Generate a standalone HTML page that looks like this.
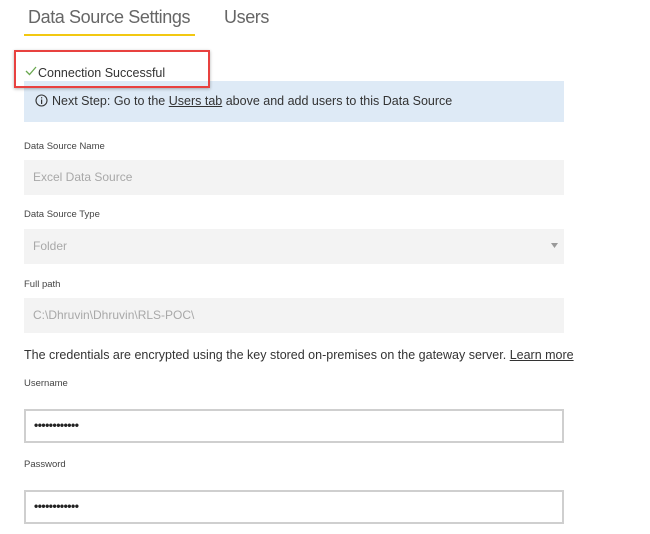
<!DOCTYPE html>
<html><head><style>
body{margin:0;width:650px;height:534px;background:#fff;font-family:"Liberation Sans",sans-serif;position:relative;overflow:hidden;color:#333}
.a{position:absolute;white-space:nowrap}
.lbl{font-size:9.5px;color:#444}
.box{position:absolute;left:24px;width:540px;height:35px;background:#f3f3f3;box-sizing:border-box}
.box span{position:absolute;left:9px;top:10px;font-size:12px;color:#a8a8a8}
.inp{position:absolute;left:24px;width:540px;height:34px;background:#fff;border:2px solid #cfcfcf;box-sizing:border-box}
.inp span{position:absolute;left:8px;top:7px;font-size:12px;letter-spacing:-0.5px;color:#222;font-weight:bold}
</style></head><body>
<div class="a" style="left:28px;top:7px;font-size:18px;letter-spacing:-0.4px;color:#666">Data Source Settings</div>
<div class="a" style="left:224px;top:7px;font-size:18px;letter-spacing:-0.4px;color:#666">Users</div>
<div class="a" style="left:24px;top:34px;width:171px;height:2px;background:#f2c811"></div>
<div class="a" style="left:24px;top:81px;width:540px;height:41px;background:#deeaf6"></div>
<div class="a" style="left:14px;top:50px;width:192px;height:34px;border:2px solid #e8413f;box-shadow:0 1px 3px rgba(0,0,0,.3)"></div>
<svg class="a" style="left:25px;top:66px" width="12" height="10"><path d="M1 5 L4.5 8.5 L11 1" stroke="#6aa84f" stroke-width="1.3" fill="none"/></svg>
<div class="a" style="left:38px;top:66px;font-size:12.5px;color:#333">Connection Successful</div>
<svg class="a" style="left:35px;top:94px" width="13" height="13"><circle cx="6.5" cy="6.5" r="5.5" stroke="#333" stroke-width="1.1" fill="none"/><rect x="6" y="5.5" width="1.2" height="4.5" fill="#333"/><rect x="6" y="3.2" width="1.2" height="1.2" fill="#333"/></svg>
<div class="a" style="left:52px;top:94px;font-size:12.5px;color:#333">Next Step: Go to the <u>Users tab</u> above and add users to this Data Source</div>
<div class="a lbl" style="left:24px;top:141px">Data Source Name</div>
<div class="box" style="top:160px"><span>Excel Data Source</span></div>
<div class="a lbl" style="left:24px;top:209px">Data Source Type</div>
<div class="box" style="top:229px"><span>Folder</span><svg style="position:absolute;left:527px;top:14px" width="7" height="5"><path d="M0 0 L7 0 L3.5 5Z" fill="#999"/></svg></div>
<div class="a lbl" style="left:24px;top:279px">Full path</div>
<div class="box" style="top:298px"><span>C:\Dhruvin\Dhruvin\RLS-POC\</span></div>
<div class="a" style="left:24px;top:348px;font-size:12.5px;color:#333">The credentials are encrypted using the key stored on-premises on the gateway server. <u>Learn more</u></div>
<div class="a lbl" style="left:24px;top:378px">Username</div>
<div class="inp" style="top:409px"><span>••••••••••••</span></div>
<div class="a lbl" style="left:24px;top:459px">Password</div>
<div class="inp" style="top:490px"><span>••••••••••••</span></div>
</body></html>
